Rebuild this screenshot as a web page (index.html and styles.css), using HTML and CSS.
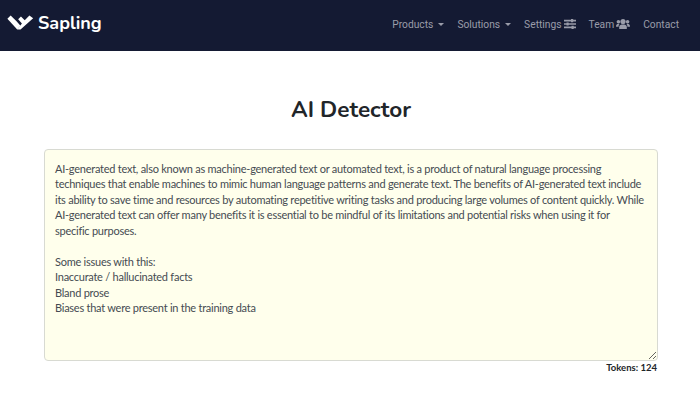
FILE: index.html
```html
<!DOCTYPE html>
<html lang="en">
<head>
    <meta charset="UTF-8">
    <title>AI Detector | Sapling</title>
    <link rel="stylesheet" href="styles.css">
</head>
<body>
    <nav class="navbar">
        <a class="brand" href="#">
            <svg class="brand-logo" viewBox="0 0 28 16" width="27" height="15">
                <path d="M0 4 L3.5 .5 L9.5 6.5 L14 11.5 L10.5 15.5 Z" fill="#fff"/>
                <path d="M10.5 15.5 L15.5 9 L11.5 4.5 L14.5 1.5 L18.5 5.5 L23.5 .5 L27.5 3.5 L14 15.5 Z" fill="#fff"/>
            </svg>
            <span>Sapling</span>
        </a>
        <ul class="nav-links">
            <li><a href="#">Products<span class="caret"></span></a></li>
            <li><a href="#">Solutions<span class="caret"></span></a></li>
            <li>
                <a href="#">Settings
                    <svg class="nav-icon" viewBox="0 0 12 10" width="12" height="10">
                        <path d="M0 .8h12v1.6H0zM0 4.2h12v1.6H0zM0 7.6h12v1.6H0z" fill="currentColor"/>
                        <path d="M7 0h2.2v3.2H7zM2.5 3.4h2.2v3.2H2.5zM7.5 6.8h2.2V10H7.5z" fill="currentColor"/>
                    </svg>
                </a>
            </li>
            <li>
                <a href="#">Team
                    <svg class="nav-icon" viewBox="0 0 14 10" width="14" height="10">
                        <circle cx="7" cy="2.6" r="2.6" fill="currentColor"/>
                        <circle cx="2.4" cy="2.8" r="1.8" fill="currentColor"/>
                        <circle cx="11.6" cy="2.8" r="1.8" fill="currentColor"/>
                        <path d="M3.2 10V7.6C3.2 6 5 5.4 7 5.4s3.8.6 3.8 2.2V10zM0 7.7C0 5.6 1 4.8 2.4 4.8c.5 0 .9.1 1.2.3-.6.5-1 1.3-1 2.6H0zM14 7.7c0-2.1-1-2.9-2.4-2.9-.5 0-.9.1-1.2.3.6.5 1 1.3 1 2.6H14z" fill="currentColor"/>
                    </svg>
                </a>
            </li>
            <li><a href="#">Contact</a></li>
        </ul>
    </nav>

    <main class="detector">
        <h1>AI Detector</h1>
        <textarea class="detector-input" spellcheck="false">AI-generated text, also known as machine-generated text or automated text, is a product of natural language processing techniques that enable machines to mimic human language patterns and generate text. The benefits of AI-generated text include its ability to save time and resources by automating repetitive writing tasks and producing large volumes of content quickly. While AI-generated text can offer many benefits it is essential to be mindful of its limitations and potential risks when using it for specific purposes.

Some issues with this:
Inaccurate / hallucinated facts
Bland prose
Biases that were present in the training data</textarea>
        <div class="tokens">Tokens: 124</div>
    </main>
</body>
</html>
```
FILE: styles.css
```css
* {
    margin: 0;
    padding: 0;
    box-sizing: border-box;
}

body {
    background-color: #fff;
    color: #212529;
    font-family: 'Lato', 'Open Sans', sans-serif;
    overflow: hidden;
}

a {
    text-decoration: none;
}

.navbar {
    display: flex;
    align-items: center;
    justify-content: space-between;
    height: 51px;
    padding: 0 21px 3px 7px;
    background-color: #141a33;
}

.brand {
    display: flex;
    align-items: center;
    gap: 4px;
    margin-bottom: 3px;
    color: #fff;
    font-family: 'Nunito', 'Lato', sans-serif;
    font-size: 18px;
    font-weight: 700;
}

.nav-links {
    display: flex;
    gap: 13px;
    list-style: none;
}

.nav-links a {
    display: flex;
    align-items: center;
    gap: 2px;
    color: #9a9ca9;
    font-family: 'Roboto', sans-serif;
    font-size: 10.25px;
}

.caret {
    width: 0;
    height: 0;
    margin-left: 3px;
    border-top: 3px solid currentColor;
    border-left: 3px solid transparent;
    border-right: 3px solid transparent;
}

.detector {
    padding: 0 42px 0 44px;
}

.detector h1 {
    margin-top: 44px;
    margin-bottom: 24px;
    text-align: center;
    font-family: 'Nunito', 'Lato', sans-serif;
    font-size: 22.5px;
    font-weight: 700;
    line-height: 30px;
}

.detector-input {
    display: block;
    width: 100%;
    height: 212px;
    padding: 11px 12px 11px 10px;
    background-color: #ffffec;
    border: 1px solid #d8dad2;
    border-radius: 4px;
    color: #454b52;
    font-family: 'Lato', sans-serif;
    font-size: 11px;
    letter-spacing: -0.25px;
    line-height: 15.45px;
    outline: none;
}

.tokens {
    margin-top: 1px;
    padding-right: 1px;
    text-align: right;
    font-size: 9.5px;
    font-weight: 700;
}
```
